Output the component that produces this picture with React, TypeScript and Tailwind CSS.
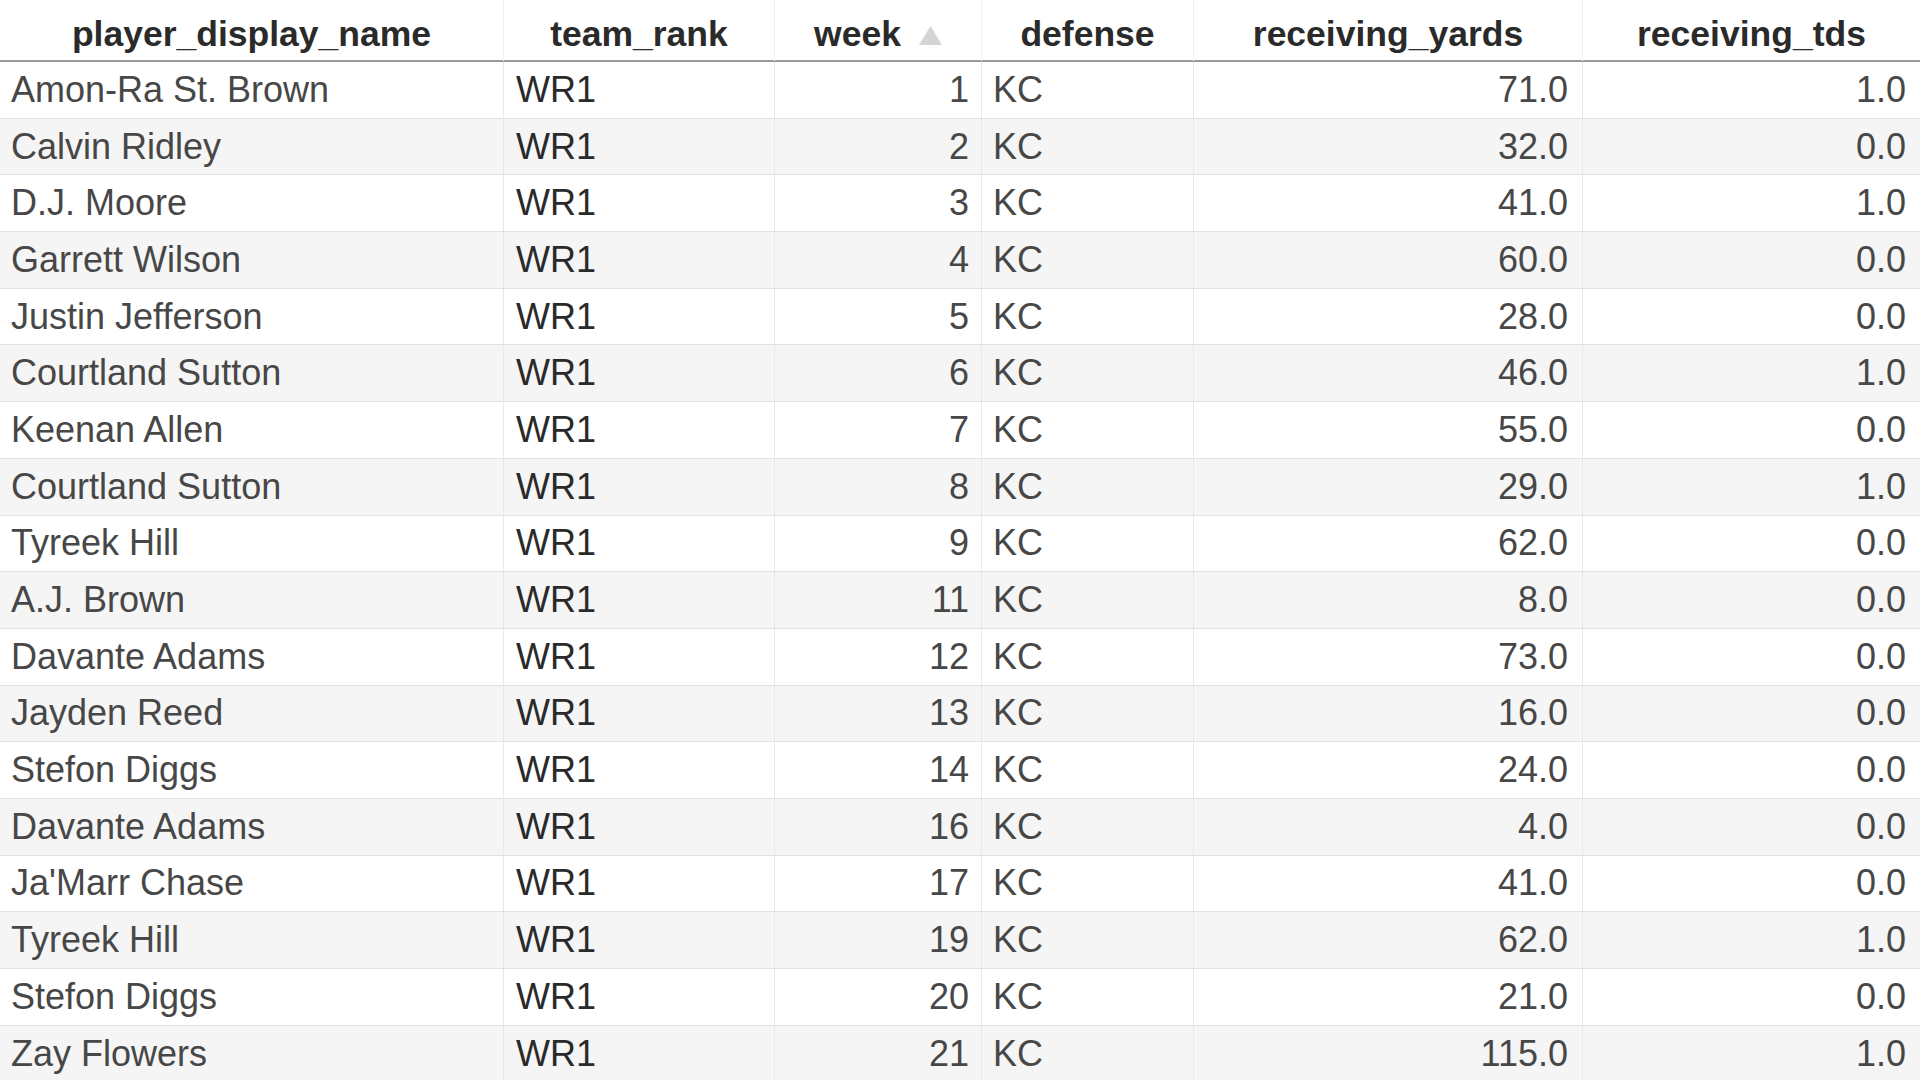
import React from "react";

const rows: [string, number, string, string][] = [
  ["Amon-Ra St. Brown", 1, "71.0", "1.0"],
  ["Calvin Ridley", 2, "32.0", "0.0"],
  ["D.J. Moore", 3, "41.0", "1.0"],
  ["Garrett Wilson", 4, "60.0", "0.0"],
  ["Justin Jefferson", 5, "28.0", "0.0"],
  ["Courtland Sutton", 6, "46.0", "1.0"],
  ["Keenan Allen", 7, "55.0", "0.0"],
  ["Courtland Sutton", 8, "29.0", "1.0"],
  ["Tyreek Hill", 9, "62.0", "0.0"],
  ["A.J. Brown", 11, "8.0", "0.0"],
  ["Davante Adams", 12, "73.0", "0.0"],
  ["Jayden Reed", 13, "16.0", "0.0"],
  ["Stefon Diggs", 14, "24.0", "0.0"],
  ["Davante Adams", 16, "4.0", "0.0"],
  ["Ja'Marr Chase", 17, "41.0", "0.0"],
  ["Tyreek Hill", 19, "62.0", "1.0"],
  ["Stefon Diggs", 20, "21.0", "0.0"],
  ["Zay Flowers", 21, "115.0", "1.0"],
];

const cols = "grid grid-cols-[504px_271px_207px_212px_389px_337px]";

export default function App() {
  return (
    <div className="w-[1920px] h-[1080px] overflow-hidden bg-white">
      <div className={`${cols} h-[62px] border-b-2 border-[#9a9a9a] text-[#2a2a2a] font-['Liberation_Sans',Arial,sans-serif] font-bold text-[35.5px]`}>
        <div className="flex items-center justify-center pt-2 border-r border-[#efefef]">player_display_name</div>
        <div className="flex items-center justify-center pt-2 border-r border-[#efefef]">team_rank</div>
        <div className="flex items-center justify-center pt-2 border-r border-[#efefef] gap-[18px]">
          <span>week</span>
          <svg width="23" height="19" viewBox="0 0 23 19" className="mt-[2px]">
            <polygon points="11.5,0 23,19 0,19" fill="#d4d4d4" />
          </svg>
        </div>
        <div className="flex items-center justify-center pt-2 border-r border-[#efefef]">defense</div>
        <div className="flex items-center justify-center pt-2 border-r border-[#efefef]">receiving_yards</div>
        <div className="flex items-center justify-center pt-2">receiving_tds</div>
      </div>
      {rows.map((r, i) => (
        <div
          key={i}
          className={`${cols} h-[56.7px] border-b border-[#e2e2e2] font-['Liberation_Sans',Arial,sans-serif] text-[36px] text-[#474747] ${i % 2 === 1 ? "bg-[#f5f5f5]" : "bg-white"}`}
        >
          <div className="flex items-center pl-[11px] border-r border-[#e8e8e8] whitespace-nowrap">{r[0]}</div>
          <div className="flex items-center pl-[12px] border-r border-[#e8e8e8] text-[#2a2a2a]">WR1</div>
          <div className="flex items-center justify-end pr-[12px] border-r border-[#e8e8e8]">{r[1]}</div>
          <div className="flex items-center pl-[11px] border-r border-[#e8e8e8]">KC</div>
          <div className="flex items-center justify-end pr-[14px] border-r border-[#e8e8e8]">{r[2]}</div>
          <div className="flex items-center justify-end pr-[14px]">{r[3]}</div>
        </div>
      ))}
    </div>
  );
}
